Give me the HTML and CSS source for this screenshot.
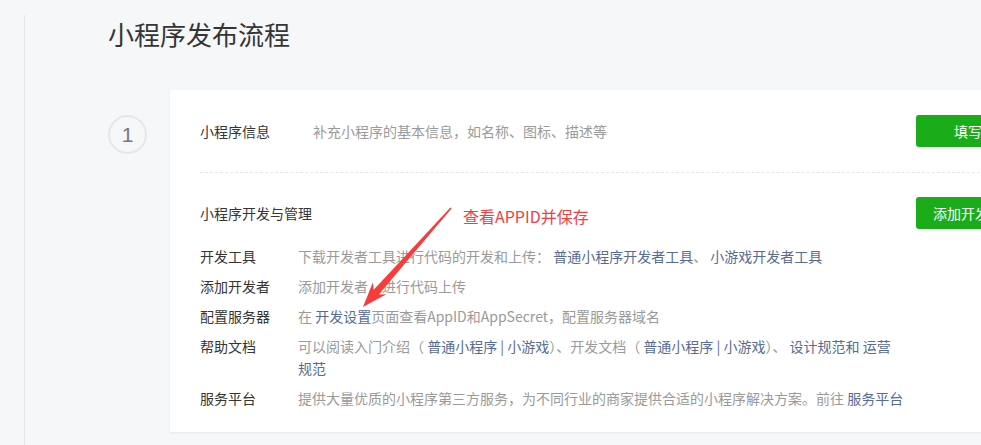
FILE: index.html
```html
<!DOCTYPE html>
<html lang="zh-CN">
<head>
    <meta charset="UTF-8">
    <title>小程序发布流程</title>
    <link rel="stylesheet" href="styles.css">
</head>
<body>
    <div class="layout">
        <div class="side"></div>
        <main class="main">
            <h1 class="page-title">小程序发布流程</h1>

            <!-- step 1 -->
            <div class="step">
                <div class="step-num">1</div>
                <div class="card">
                    <div class="section section-info">
                        <span class="label label-wide">小程序信息</span>
                        <span class="desc">补充小程序的基本信息，如名称、图标、描述等</span>
                        <a class="btn btn-fill">填写</a>
                    </div>
                    <div class="section section-dev">
                        <div class="dev-head">
                            <span class="head-label">小程序开发与管理</span>
                            <a class="btn">添加开发者</a>
                        </div>
                        <ul class="dev-list">
                            <li>
                                <span class="label">开发工具</span>
                                <span class="desc">下载开发者工具进行代码的开发和上传： <a>普通小程序开发者工具</a>、 <a>小游戏开发者工具</a></span>
                            </li>
                            <li>
                                <span class="label">添加开发者</span>
                                <span class="desc">添加开发者，进行代码上传</span>
                            </li>
                            <li>
                                <span class="label">配置服务器</span>
                                <span class="desc">在 <a>开发设置</a>页面查看AppID和AppSecret，配置服务器域名</span>
                            </li>
                            <li>
                                <span class="label">帮助文档</span>
                                <span class="desc desc-help">可以阅读入门介绍（ <a>普通小程序 | 小游戏</a>）、开发文档（ <a>普通小程序 | 小游戏</a>）、 <a>设计规范和</a> <a>运营规范</a></span>
                            </li>
                            <li>
                                <span class="label">服务平台</span>
                                <span class="desc">提供大量优质的小程序第三方服务，为不同行业的商家提供合适的小程序解决方案。前往 <a>服务平台</a></span>
                            </li>
                        </ul>
                    </div>

                    <!-- screenshot annotation -->
                    <span class="note">查看APPID并保存</span>
                    <svg class="note-arrow" width="110" height="115" viewBox="0 0 110 115">
                        <polygon points="101.6,8.4 28.9,94.4 36.3,94.3 13,107 22.9,82.3 23.7,89.8 100.4,7.6" fill="#f63d3d"/>
                    </svg>
                </div>
            </div>
        </main>
    </div>
</body>
</html>
```

FILE: styles.css
```css
/* Basic page */
body {
    margin: 0;
    background-color: #f6f7f9;
    font-family: "Microsoft YaHei", "Noto Sans CJK SC", sans-serif;
    font-size: 14px;
    color: #353535;
    overflow: hidden;
}

.layout {
    display: flex;
    min-height: 100vh;
}

.side {
    width: 24px;
    flex-shrink: 0;
}

.main {
    margin-top: 15px;
    border-left: 1px solid #e3e4e8;
    padding-left: 83px;
    flex: 1;
}

.page-title {
    margin: 1px 0 0;
    font-size: 26px;
    font-weight: normal;
    line-height: 36px;
    color: #353535;
}

/* Step with number circle */
.step {
    display: flex;
    align-items: flex-start;
    margin-top: 38px;
}

.step-num {
    width: 35px;
    height: 35px;
    margin-top: 25px;
    margin-right: 23px;
    border: 2px solid #e7e7eb;
    border-radius: 50%;
    flex-shrink: 0;
    display: flex;
    align-items: center;
    justify-content: center;
    font-family: "Liberation Sans", Arial, sans-serif;
    font-size: 21px;
    color: #777;
}

.card {
    position: relative;
    width: 880px;
    flex-shrink: 0;
    padding: 0 30px 23px;
    box-sizing: border-box;
    background-color: white;
    box-shadow: 0 1px 2px rgba(0, 0, 0, 0.07);
}

.label {
    display: inline-block;
    width: 98px;
    flex-shrink: 0;
    color: #353535;
}

.label-wide {
    width: 113px;
}

.head-label {
    color: #353535;
}

.desc {
    color: #9a9a9a;
}

.desc a {
    color: #576b95;
    text-decoration: none;
}

/* Buttons */
.btn {
    display: inline-flex;
    align-items: center;
    justify-content: center;
    min-width: 104px;
    height: 32px;
    padding: 0 16px;
    box-sizing: border-box;
    margin-left: auto;
    border-radius: 3px;
    background-color: #1aad19;
    color: white;
    text-decoration: none;
    flex-shrink: 0;
}

/* Sections */
.section-info {
    display: flex;
    align-items: center;
    padding: 25px 0;
    border-bottom: 1px dashed #e7e7eb;
    line-height: 22px;
}

.section-dev {
    padding-top: 24px;
}

.dev-head {
    display: flex;
    align-items: center;
    line-height: 22px;
}

.dev-list {
    list-style: none;
    margin: 16px 0 0;
    padding: 0;
}

.dev-list li {
    display: flex;
    line-height: 22px;
    margin-bottom: 8px;
}

.dev-list li:last-child {
    margin-bottom: 0;
}

.dev-list .desc-help {
    max-width: 600px;
}

/* Annotation overlay */
.note {
    position: absolute;
    left: 293px;
    top: 115px;
    font-size: 16px;
    line-height: 22px;
    color: #f63d3d;
}

.note-arrow {
    position: absolute;
    left: 180px;
    top: 110px;
}
```
